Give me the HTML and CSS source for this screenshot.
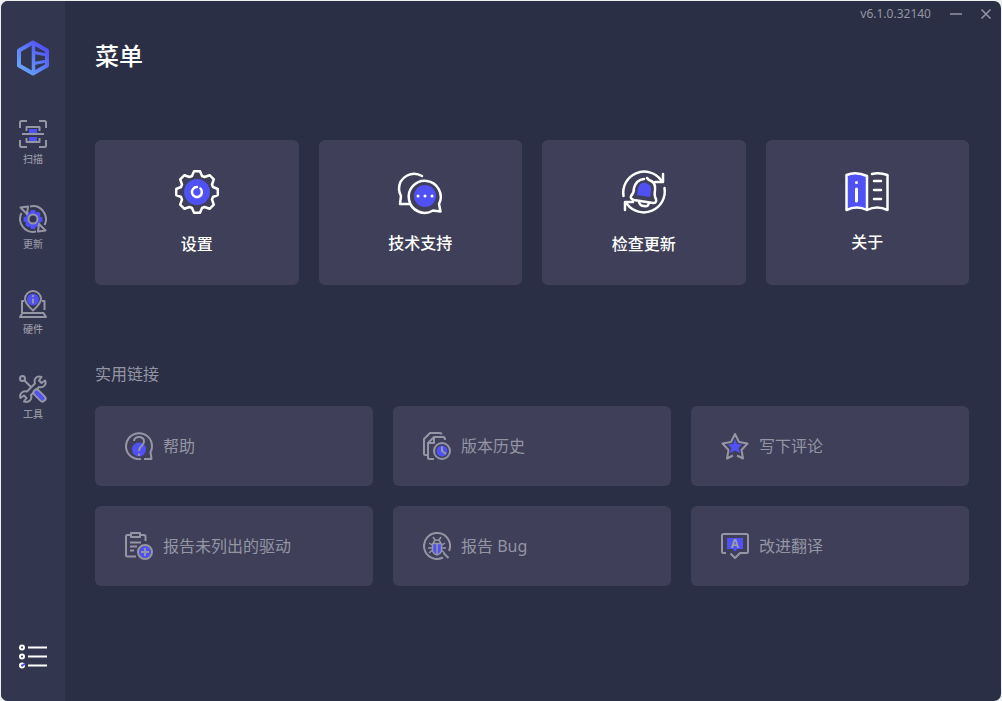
FILE: index.html
```html
<!DOCTYPE html>
<html lang="zh-CN">
<head>
  <meta charset="UTF-8">
  <meta name="viewport" content="width=device-width, initial-scale=1.0">
  <title>菜单</title>
  <link rel="stylesheet" href="styles.css">
</head>
<body>
  <div class="window">
    <aside class="sidebar">
      <svg class="logo" viewBox="0 0 34 38" fill="none">
        <defs>
          <linearGradient id="logo-gradient" gradientUnits="userSpaceOnUse" x1="4" y1="30" x2="28" y2="6">
            <stop offset="0" stop-color="#66a6ff"/>
            <stop offset="1" stop-color="#5050f5"/>
          </linearGradient>
        </defs>
        <g stroke="url(#logo-gradient)" stroke-linejoin="round">
          <path stroke-width="4" d="M17 3.500 31 11.500V26.500L17 34.500 3 26.500V11.500Z"/>
          <path stroke-width="3.500" d="M17.500 4V34"/>
          <path stroke-width="3" d="M18 13.500 31 16M18 24.500 31 22"/>
        </g>
      </svg>

      <nav class="side-nav">
        <a href="#scan" class="side-link">
          <svg class="icon" viewBox="0 0 28 28">
            <path class="accent" d="M10 9h8v4h-8zM10 17h8v4h-8z"/>
            <path d="M1 8V2.500Q1 1 2.500 1H8M20 1h5.500Q27 1 27 2.500V8M27 20v5.500Q27 27 25.500 27H20M8 27H2.500Q1 27 1 25.500V20"/>
            <path d="M7.500 11V7h13v4M7.500 18v4h13v-4M3 14h22"/>
          </svg>
          <span>扫描</span>
        </a>
        <a href="#update" class="side-link">
          <svg class="icon" viewBox="0 0 28 28">
            <path class="accent" d="M12 5h4l1 2.500 3-.5 1.500 2-.5 2.500 2.500 1v4l-2.500 1 .5 2.500-2 2-2.500-.5-1 2.500h-4l-1-2.500-2.500.5-2-2 .5-2.500-2.500-1v-4l2.500-1-.5-2.500 2-2 2.500.5z"/>
            <circle cx="14" cy="14" r="4.500" fill="#33364f"/>
            <path d="M11 1.500A13 13 0 0 1 25.500 20M17 26.500A13 13 0 0 1 2.500 8"/>
            <path d="M1.500 2.500 9 1.500 8 9ZM26.500 25.500 19 26.500 20 19Z"/>
          </svg>
          <span>更新</span>
        </a>
        <a href="#hardware" class="side-link">
          <svg class="icon" viewBox="0 0 28 28">
            <circle class="accent" cx="14" cy="9.500" r="6"/>
            <path d="M14 20.500C11 17.500 6 13.500 6 9A8 8 0 0 1 22 9C22 13.500 17 17.500 14 20.500Z"/>
            <path d="M14 8.500v5M14 5v2"/>
            <path d="M5 11H3v12M23 11h2.500v9M3.500 23h21l2.500 4H1Z"/>
          </svg>
          <span>硬件</span>
        </a>
        <a href="#tools" class="side-link">
          <svg class="icon" viewBox="0 0 28 28">
            <path d="M26 5.500 22.500 8 20 5.500 22.500 2C17.500 0 14.500 4 16 8.500L8 16.500C3.500 15.500 0 19 1.500 23L5 20.500 7.500 23 5 26.500C10 28 13.500 24.500 12 20L20 12C24.500 13 28 9.500 26 5.500Z"/>
            <circle cx="3.500" cy="3.500" r="2.500"/>
            <path d="M5.500 5.500 12 12"/>
            <path class="accent-line" d="M17.500 17.500 23.500 23.500" stroke-width="8"/>
            <path class="handle" d="M17.500 17.500 23.500 23.500"/>
          </svg>
          <span>工具</span>
        </a>
      </nav>

      <button type="button" class="menu-btn" aria-label="菜单">
        <svg class="icon menu-icon" viewBox="0 0 28 26">
          <circle cx="3" cy="3.500" r="2"/>
          <circle cx="3" cy="12.500" r="2"/>
          <circle cx="3" cy="21.500" r="2"/>
          <path class="accent-line" d="M3.500 21.500l2-1.500"/>
          <path d="M9 3.500h19M9 12.500h19M9 21.500h19"/>
        </svg>
      </button>
    </aside>

    <main class="content">
      <header class="title-bar">
        <span class="version">v6.1.0.32140</span>
        <button type="button" class="window-btn" aria-label="最小化">
          <svg viewBox="0 0 12 12"><path d="M0 6h12"/></svg>
        </button>
        <button type="button" class="window-btn" aria-label="关闭">
          <svg viewBox="0 0 12 12"><path d="M1.500 1.500l9 9M10.500 1.500l-9 9"/></svg>
        </button>
      </header>

      <div class="page">
        <h1>菜单</h1>

        <div class="tiles">
          <a href="#settings" class="tile">
            <svg class="tile-icon" viewBox="-22 -22 44 44">
              <circle class="accent" r="13"/>
              <path d="M-3-20.800H3L5-16 7.500-15 12.600-16.800 16.800-12.600 15-7.500 16-5 20.800-3V3L16 5 15 7.500 16.800 12.600 12.600 16.800 7.500 15 5 16 3 20.800H-3L-5 16-7.500 15-12.600 16.800-16.800 12.600-15 7.500-16 5-20.800 3V-3L-16-5-15-7.500-16.800-12.600-12.600-16.800-7.500-15-5-16Z"/>
              <path d="M3.500-3.500A5 5 0 1 1 0-5"/>
            </svg>
            <span>设置</span>
          </a>
          <a href="#support" class="tile">
            <svg class="tile-icon short" viewBox="0 0 44 41">
              <circle class="accent" cx="27" cy="24" r="11"/>
              <path d="M24 4C14-2 1 5 1 17Q1 20 3 24L2 32H11"/>
              <path d="M35 38.500A16 16 0 1 1 41 32L42.500 39.500Z"/>
              <path stroke-width="3" d="M20 24h.01M27 24h.01M34 24h.01"/>
            </svg>
            <span>技术支持</span>
          </a>
          <a href="#check-update" class="tile">
            <svg class="tile-icon" viewBox="0 0 44 44">
              <path class="accent" d="M15 25 16 18Q18 12 24 13 30 15 29 21L28 27Z"/>
              <path d="M1.500 26A21 21 0 0 1 39 10M42.500 18A21 21 0 0 1 5 34"/>
              <path d="M41 4V12H33M3 40V32H11"/>
              <path d="M22 9Q14 10 12 18 12 23 9 26 8 29 12 30L31 33Q35 33 34 29 32 26 33 20 34 12 27 10L25 8"/>
              <path d="M17 32Q18 36 22 36 26 37 27 33"/>
            </svg>
            <span>检查更新</span>
          </a>
          <a href="#about" class="tile">
            <svg class="tile-icon low" viewBox="0 0 44 40">
              <path class="accent" d="M1 3Q11-1 22 4V38Q12 33 1 37Z"/>
              <path d="M22 4Q11-1 1.500 3V38Q12 33 22 38ZM22 38Q32 33 42.500 38V3Q34 0 27 2"/>
              <path d="M29 9h7M29 18h7M29 27h7"/>
              <path stroke-width="3" d="M11.500 17v12M11.500 10.500v.01"/>
            </svg>
            <span>关于</span>
          </a>
        </div>

        <h2>实用链接</h2>

        <div class="links">
          <a href="#help" class="link-card">
            <svg class="icon" viewBox="0 0 28 28">
              <circle class="accent" cx="14" cy="17.500" r="7"/>
              <path d="M16 27A13 13 0 1 1 27 14Q27 18 25.500 20L26.500 27H19"/>
              <path d="M9 9Q9.500 5 14 5 19 5 19 9.500 19 12 16.500 14 14 16 14 19M14 21.500v2.500"/>
            </svg>
            <span>帮助</span>
          </a>
          <a href="#history" class="link-card">
            <svg class="icon" viewBox="0 0 28 28">
              <circle class="accent" cx="19" cy="19" r="5.500"/>
              <path d="M5 23H2.500Q1 23 1 21.500V7L7 1H17Q18.500 1 18.500 2.500"/>
              <path d="M11 27H6.500Q5 27 5 25.500V11L11 5H20Q22 5 22 8M11 5V11H5"/>
              <circle cx="19" cy="19" r="8"/>
              <path d="M19 14.500V19l4 3"/>
            </svg>
            <span>版本历史</span>
          </a>
          <a href="#review" class="link-card">
            <svg class="icon" viewBox="0 0 28 28">
              <path class="accent" d="M14 7 16 12 21 12.500 17.500 16 19 21 14 18.500 9 21 10.500 16 7 12.500 12 12Z"/>
              <path d="M12 23.500 6 26.500 7.500 18 1.500 11.500 10 10 14 2 18 10 26.500 11.500 20.500 18 22 26.500 16 23.500"/>
            </svg>
            <span>写下评论</span>
          </a>
          <a href="#report-driver" class="link-card">
            <svg class="icon" viewBox="0 0 28 28">
              <circle class="accent" cx="20" cy="20" r="6"/>
              <path d="M5 3H2.500Q1 3 1 4.500V23Q1 24.500 2.500 24.500H11M16 3h3Q20.500 3 20.500 4.500V9"/>
              <path d="M6 1h9v4H6zM5 10.500h11M5 14.500h7M5 18.500h4"/>
              <circle cx="20" cy="20" r="7"/>
              <path d="M20 16v8M16 20h8"/>
            </svg>
            <span>报告未列出的驱动</span>
          </a>
          <a href="#report-bug" class="link-card">
            <svg class="icon" viewBox="0 0 28 28">
              <path class="accent" d="M9.500 12h9v7Q18 22 14 23 10 22 9.500 19Z"/>
              <path d="M26 19A13 13 0 1 0 20 25.500M20.500 21 25.500 26"/>
              <path stroke-width="1.500" d="M9.500 11.500h9V18Q18 22 14 23 10 22 9.500 18ZM10.500 11Q11 8 14 8 17 8 17.500 11M10 5 12 8M18 5 16 8M14 12v10M9 13 6 11M9 16H5M9.500 18 6 21M19 13l3-2M19 16h4M18.500 18l3 3"/>
            </svg>
            <span>报告 Bug</span>
          </a>
          <a href="#translate" class="link-card">
            <svg class="icon" viewBox="0 0 28 28">
              <path class="accent" d="M6 6H22V17H16.500L14 19.500 11.500 17H6Z"/>
              <path d="M5 21H2.500Q1 21 1 19.500V3.500Q1 2 2.500 2H25.500Q27 2 27 3.500V19.500Q27 21 25.500 21H19L14 26 9.500 21.500"/>
              <text x="14" y="16" text-anchor="middle">A</text>
            </svg>
            <span>改进翻译</span>
          </a>
        </div>
      </div>
    </main>
  </div>
</body>
</html>
```
FILE: styles.css
```css
* {
  box-sizing: border-box;
}
body {
  margin: 0;
  padding: 1px 1px 0;
  min-height: 100vh;
  display: flex;
  background-color: #eef0f0;
  font-family: "Noto Sans", "Noto Sans CJK SC", sans-serif;
  color: #9495a3;
}
a {
  color: inherit;
  text-decoration: none;
}
button {
  background: none;
  border: none;
  padding: 0;
  cursor: pointer;
}
.window {
  flex: 1;
  display: flex;
  background-color: #2b2f45;
  border-radius: 7px;
  overflow: hidden;
}

/* Sidebar */
.sidebar {
  width: 64px;
  flex-shrink: 0;
  display: flex;
  flex-direction: column;
  align-items: center;
  padding: 38px 0 31px;
  background-color: #33364f;
}
.logo {
  width: 34px;
  height: 38px;
}
.side-nav {
  display: flex;
  flex-direction: column;
  gap: 38px;
  margin-top: 43px;
}
.side-link {
  display: flex;
  flex-direction: column;
  align-items: center;
  gap: 3px;
  font-size: 10px;
  font-weight: 500;
  line-height: 16px;
}
.menu-btn {
  margin-top: auto;
}
.icon {
  display: block;
  width: 28px;
  height: 28px;
  fill: none;
  stroke: #9596a4;
  stroke-width: 2;
  stroke-linejoin: round;
}
.icon text {
  font-size: 12px;
  font-weight: 700;
  fill: #9b9cab;
  stroke: none;
}
.accent {
  fill: #5051f5;
  stroke: none;
}
.accent-line {
  stroke-linecap: round;
}
.handle {
  stroke: #5051f5;
  stroke-width: 4;
  stroke-linecap: round;
}
.menu-icon {
  height: 26px;
  stroke: #fff;
}
.menu-icon .accent-line {
  stroke: #5051f5;
}

/* Title bar */
.content {
  flex: 1;
}
.title-bar {
  display: flex;
  justify-content: flex-end;
  align-items: center;
  height: 26px;
}
.version {
  margin-right: 10px;
  font-size: 12px;
  line-height: 18px;
}
.window-btn {
  display: flex;
  justify-content: center;
  align-items: center;
  width: 30px;
  height: 26px;
}
.window-btn svg {
  width: 12px;
  height: 12px;
  stroke: #9495a3;
  stroke-width: 1.5;
}

/* Page */
.page {
  padding: 13px 32px 32px 30px;
}
h1 {
  margin: 0 0 68px;
  font-size: 24px;
  font-weight: 500;
  line-height: 32px;
  color: #fff;
}
h2 {
  margin: 77px 0 20px;
  font-size: 16px;
  font-weight: 400;
  line-height: 24px;
}
.tiles {
  display: grid;
  grid-template-columns: repeat(4, 1fr);
  gap: 20px;
}
.tile {
  display: flex;
  flex-direction: column;
  justify-content: center;
  align-items: center;
  gap: 20px;
  height: 145px;
  background-color: #3f3f59;
  border-radius: 6px;
  font-size: 16px;
  font-weight: 500;
  line-height: 21px;
  color: #fff;
}
.tile-icon {
  width: 44px;
  height: 44px;
  fill: none;
  stroke: #fff;
  stroke-width: 2.5;
  stroke-linecap: round;
  stroke-linejoin: round;
  overflow: visible;
}
.tile-icon.short {
  height: 41px;
}
.tile-icon.low {
  height: 40px;
}
.links {
  display: grid;
  grid-template-columns: repeat(3, 1fr);
  gap: 20px;
}
.link-card {
  display: flex;
  align-items: center;
  gap: 10px;
  height: 80px;
  padding: 0 30px;
  background-color: #3f3f59;
  border-radius: 6px;
  font-size: 16px;
  line-height: 21px;
}
.tile:hover, .link-card:hover {
  background-color: #484866;
}
```
